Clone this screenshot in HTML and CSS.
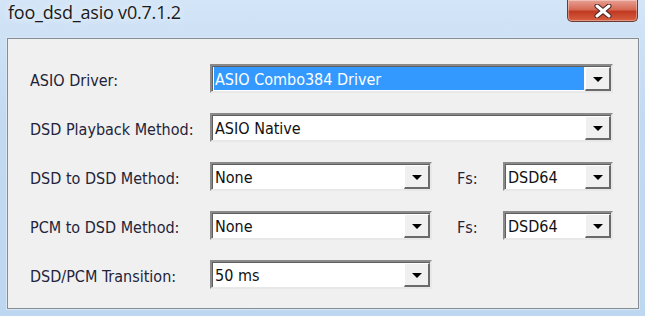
FILE: index.html
```html
<!DOCTYPE html>
<html lang="en">
  <head>
    <meta charset="UTF-8" />
    <title>foo_dsd_asio v0.7.1.2</title>
    <link rel="stylesheet" href="styles.css">
  </head>
  <body>
    <div class="window">
      <div class="titlebar">
        <span class="title">foo_dsd_asio v0.7.1.2</span>
        <div class="close">
          <svg width="20" height="14" viewBox="0 0 20 14">
            <path d="M4 2 L16 12 M16 2 L4 12" stroke="#4a2222" stroke-width="5" stroke-linecap="round" />
            <path d="M4 2 L16 12 M16 2 L4 12" stroke="#ffffff" stroke-width="3" stroke-linecap="round" />
          </svg>
        </div>
      </div>
      <div class="client">
        <div class="row">
          <label>ASIO Driver:</label>
          <div class="combo wide">
            <span class="value selected">ASIO Combo384 Driver</span>
            <span class="arrow"></span>
          </div>
        </div>
        <div class="row">
          <label>DSD Playback Method:</label>
          <div class="combo wide">
            <span class="value">ASIO Native</span>
            <span class="arrow"></span>
          </div>
        </div>
        <div class="row">
          <label>DSD to DSD Method:</label>
          <div class="combo short">
            <span class="value">None</span>
            <span class="arrow"></span>
          </div>
          <label class="fs">Fs:</label>
          <div class="combo small">
            <span class="value">DSD64</span>
            <span class="arrow"></span>
          </div>
        </div>
        <div class="row">
          <label>PCM to DSD Method:</label>
          <div class="combo short">
            <span class="value">None</span>
            <span class="arrow"></span>
          </div>
          <label class="fs">Fs:</label>
          <div class="combo small">
            <span class="value">DSD64</span>
            <span class="arrow"></span>
          </div>
        </div>
        <div class="row">
          <label>DSD/PCM Transition:</label>
          <div class="combo short">
            <span class="value">50 ms</span>
            <span class="arrow"></span>
          </div>
        </div>
      </div>
    </div>
  </body>
</html>
```

FILE: styles.css
```css
* {
  margin: 0;
  padding: 0;
  box-sizing: border-box;
}

body {
  width: 645px;
  height: 316px;
  overflow: hidden;
  font-family: "DejaVu Sans Condensed", "DejaVu Sans", sans-serif;
}

.window {
  width: 645px;
  height: 316px;
  background: linear-gradient(180deg, #d3e5f7 0%, #c2d9f1 40%, #bed7f0 100%);
}

.titlebar {
  height: 38px;
  display: flex;
  justify-content: space-between;
  align-items: flex-start;
  padding-left: 8px;
}

.title {
  font-family: "Open Sans", "Noto Sans", sans-serif;
  font-size: 18px;
  letter-spacing: -0.2px;
  color: #1a1a1a;
  text-shadow: 0 0 6px rgba(255, 255, 255, 0.9);
}

.close {
  width: 71px;
  height: 22px;
  margin-right: 7px;
  display: flex;
  justify-content: center;
  align-items: center;
  background: linear-gradient(180deg, #e8a094 0%, #d66a55 45%, #c03a22 55%, #d85f40 100%);
  border: 1px solid #6b3a35;
  border-top: none;
  border-radius: 0 0 5px 5px;
  box-shadow: inset 0 0 0 1px rgba(255, 255, 255, 0.35);
}

.client {
  height: 271px;
  margin: 0 6px 0 7px;
  background-color: #f0f0f0;
  border: 1px solid #848c96;
  box-shadow: 0 0 0 1px #d9e6f3;
  padding: 25px 0 0 22px;
  display: flex;
  flex-direction: column;
  gap: 20px;
}

.row {
  height: 29px;
  display: flex;
  align-items: center;
}

label {
  width: 180px;
  padding-top: 3px;
  font-size: 16px;
  color: #23233a;
}

label.fs {
  width: 46px;
  margin-left: 25px;
}

.combo {
  height: 29px;
  display: flex;
  align-items: stretch;
  background-color: white;
  border-top: 2px solid #8a8a8a;
  border-left: 2px solid #8a8a8a;
  border-right: 2px solid #e8e8e8;
  border-bottom: 2px solid #e8e8e8;
  box-shadow: inset 1px 1px 0 #5f5f5f;
}

.combo.wide {
  width: 403px;
}

.combo.short {
  width: 222px;
}

.combo.small {
  width: 110px;
}

.value {
  flex: 1;
  display: flex;
  align-items: center;
  margin: 1px 1px 1px 2px;
  padding: 2px 0 0 1px;
  font-size: 16px;
  color: #111;
}

.value.selected {
  background-color: #3399ff;
  color: white;
}

.arrow {
  width: 26px;
  background-color: #f0f0f0;
  border-top: 1px solid #ffffff;
  border-left: 1px solid #ffffff;
  border-right: 2px solid #6a6a6a;
  border-bottom: 2px solid #6a6a6a;
  margin: 1px 0 0 0;
  display: flex;
  justify-content: center;
  align-items: center;
}

.arrow::after {
  content: "";
  border-left: 5px solid transparent;
  border-right: 5px solid transparent;
  border-top: 5px solid #000;
  margin-top: 1px;
}
```
